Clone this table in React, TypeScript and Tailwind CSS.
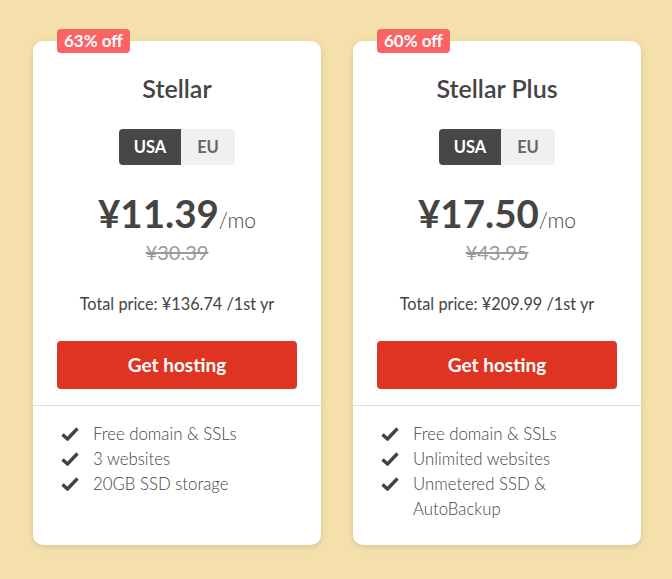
import React from "react";

const plans = [
  {
    name: "Stellar",
    off: "63% off",
    price: "¥11.39",
    old: "¥30.39",
    total: "Total price: ¥136.74 /1st yr",
    features: ["Free domain & SSLs", "3 websites", "20GB SSD storage"],
  },
  {
    name: "Stellar Plus",
    off: "60% off",
    price: "¥17.50",
    old: "¥43.95",
    total: "Total price: ¥209.99 /1st yr",
    features: ["Free domain & SSLs", "Unlimited websites", "Unmetered SSD & AutoBackup"],
  },
];

const Check = () => (
  <svg width="18" height="14" viewBox="0 0 18 14" className="mt-[6px] shrink-0">
    <path d="M1.5 7.5 L6.5 12 L16.5 1.5" fill="none" stroke="#444" strokeWidth="3.4" />
  </svg>
);

export default function App() {
  return (
    <div className="min-h-[579px] w-[672px] bg-[#f5e0ac] font-['Lato','Liberation_Sans',sans-serif] text-[#444]">
      <div className="flex gap-[32px] pl-[33px] pt-[41px]">
        {plans.map((p) => (
          <div
            key={p.name}
            className="relative flex w-[288px] flex-col rounded-[10px] bg-white pb-[24px] shadow-[0_2px_6px_rgba(0,0,0,0.12)]"
          >
            <div className="absolute left-[24px] top-[-12px] rounded-[4px] bg-[#fa6464] px-[7px] text-[17px] font-bold leading-[24px] text-white">
              {p.off}
            </div>
            <h2 className="mt-[32px] text-center text-[25px] font-semibold leading-[30px] text-[#444]">{p.name}</h2>
            <div className="mt-[26px] flex justify-center">
              <div className="flex h-[36px] overflow-hidden rounded-[4px] text-[16.5px] font-bold">
                <span className="flex w-[62px] items-center justify-center bg-[#474747] text-white">USA</span>
                <span className="flex w-[54px] items-center justify-center bg-[#f0f0f0] text-[#666]">EU</span>
              </div>
            </div>
            <div className="mt-[24px] flex items-baseline justify-center">
              <span className="text-[38.5px] font-bold leading-[48px] text-[#444]">{p.price}</span>
              <span className="text-[21px] font-light text-[#444]">/mo</span>
            </div>
            <div className="mt-[3px] text-center text-[20px] leading-[24px] text-[#999] line-through">{p.old}</div>
            <div className="mt-[29px] text-center text-[16.3px] leading-[22px] text-[#444]">{p.total}</div>
            <div className="mt-[26px] px-[24px]">
              <button className="h-[48px] w-full rounded-[4px] bg-[#e03423] text-[19px] font-bold text-white">
                Get hosting
              </button>
            </div>
            <div className="mt-[16px] border-t border-[#ddd]" />
            <ul className="mt-[15px] flex flex-col pl-[28px] pr-[24px] text-[16.8px] font-light leading-[25px] text-[#444]">
              {p.features.map((f) => (
                <li key={f} className="flex gap-[14px]">
                  <Check />
                  <span>{f}</span>
                </li>
              ))}
            </ul>
          </div>
        ))}
      </div>
    </div>
  );
}
